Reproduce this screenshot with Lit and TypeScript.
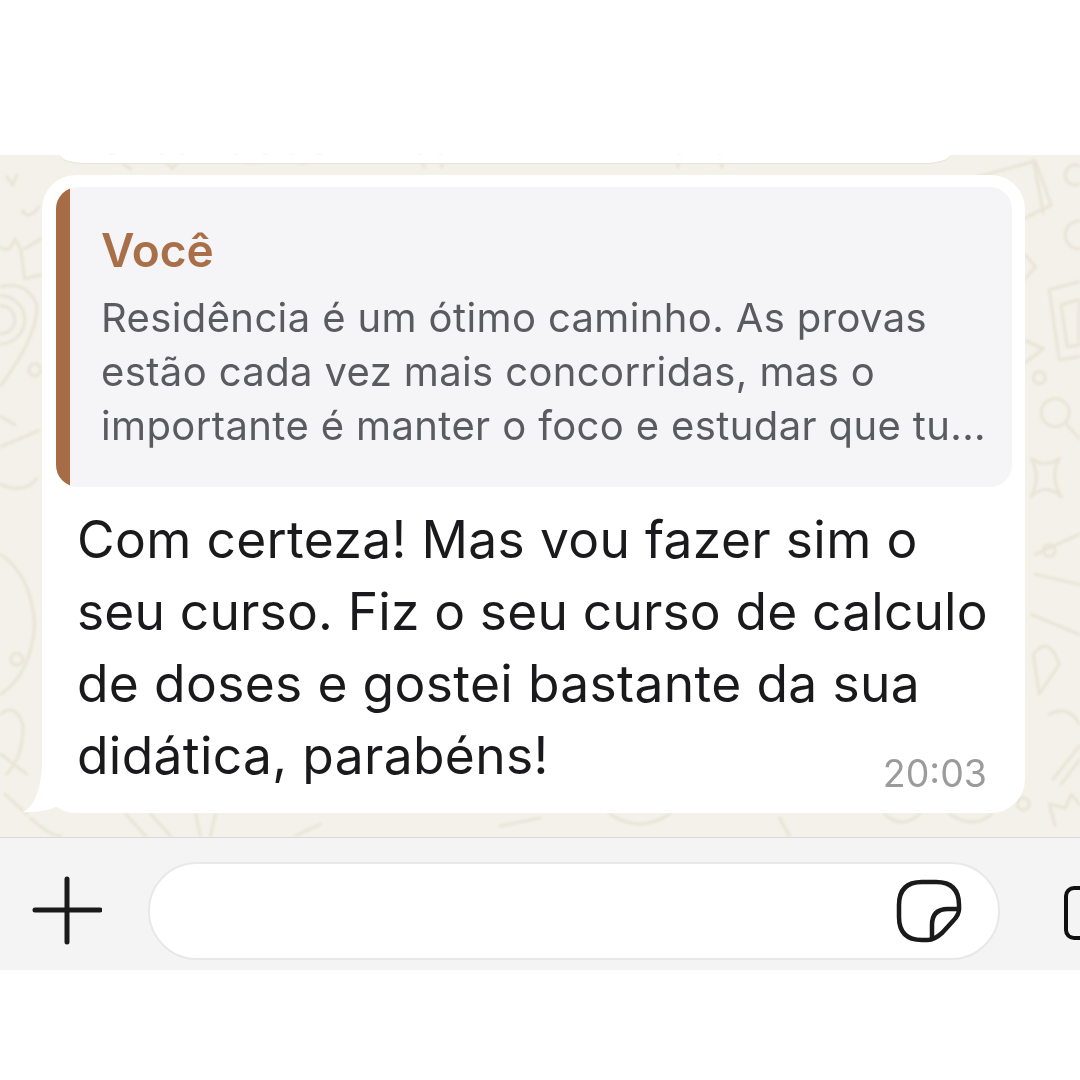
import { LitElement, html, css, svg } from "lit";
import { customElement } from "lit/decorators.js";

const doodles = svg`
  <g fill="none" stroke="#e9e4d6" stroke-width="3" stroke-linecap="round" stroke-linejoin="round">
    <path d="M6 22 L12 30 L16 20"/>
    <path d="M22 56 Q28 66 38 52"/>
    <path d="M0 92 Q8 100 14 84 L20 94 L24 124 L40 120 M24 94 L40 84"/>
    <path d="M0 132 Q26 126 36 150 Q38 180 0 231"/>
    <circle cx="0" cy="165" r="14"/><circle cx="0" cy="165" r="24"/><circle cx="34" cy="215" r="6"/>
    <path d="M0 292 L38 276 M0 262 L14 270 M0 330 Q24 340 36 324"/>
    <path d="M0 400 Q30 420 34 470 Q30 520 0 540"/>
    <circle cx="16" cy="505" r="6"/>
    <path d="M0 560 Q14 548 22 570 Q24 600 6 620 M0 600 L26 620 M4 640 L26 660"/>
    <path d="M110 0 L130 14 M160 0 L172 14 L182 0 M235 0 Q250 16 265 0 M290 0 Q300 16 320 0 M420 0 L424 12 M440 0 L442 12 M680 0 L678 12 M720 0 L722 12"/>
    <path d="M978 22 L1036 6 L1052 50 L1024 64 M1034 5 L1044 58"/>
    <circle cx="1076" cy="20" r="10"/><circle cx="1080" cy="80" r="14"/>
    <path d="M1026 100 L1036 112 L1026 124 M1026 186 L1044 194 L1026 208"/>
    <path d="M1050 135 L1080 127 M1050 135 L1060 205 L1080 202 M1062 150 L1080 145 L1080 190 L1068 192 Z"/>
    <circle cx="1040" cy="223" r="6"/><circle cx="1056" cy="258" r="14"/>
    <path d="M1066 268 L1080 284"/>
    <path d="M1032 304 Q1046 314 1060 304 Q1050 322 1062 342 Q1046 328 1032 342 Q1042 322 1032 304 Z"/>
    <path d="M1036 400 L1080 380 M1036 420 L1080 430 M1032 460 L1080 480"/>
    <circle cx="1050" cy="396" r="6"/>
    <path d="M1034 500 Q1050 480 1060 510 L1040 540 Z M1050 560 Q1070 550 1080 570"/>
    <path d="M1054 625 L1080 592 M1062 630 L1080 606"/>
    <circle cx="1024" cy="650" r="6"/>
    <path d="M1056 672 L1050 650 L1066 654 L1072 640 L1080 650"/>
    <path d="M30 664 Q50 682 60 682 M125 660 L145 682 M150 660 L170 682 M195 660 L200 682 M215 660 L210 682"/>
    <path d="M320 670 L295 682 M500 672 L540 664 M610 660 Q640 680 670 660 M780 664 L790 682 M885 660 Q903 676 920 660 M950 660 Q975 676 992 660"/>
  </g>`;

@customElement("app-root")
export class AppRoot extends LitElement {
  static styles = css`
    :host { display: flex; flex-direction: column; width: 1080px; height: 1080px; background: #fff;
      font-family: Inter, "Liberation Sans", sans-serif; overflow: hidden; }
    .top { height: 155px; flex: none; }
    .chat { position: relative; height: 683px; flex: none; background: #f4f1ea; border-bottom: 1px solid #d9d9d9; box-sizing: border-box; }
    .doodles { position: absolute; inset: 0; width: 100%; height: 100%; filter: blur(0.9px); }
    .prev { position: relative; height: 8px; margin: 0 130px 12px 60px; background: #fff; border-radius: 0 0 28px 28px / 0 0 8px 8px; box-shadow: 0 1px 1px #e6e3da; }
    .bubble { position: relative; margin: 0 55px 0 42px; height: 638px; box-sizing: border-box; padding: 12px 13px 0 14px; background: #fff; border-radius: 34px; }
    .tail { position: absolute; left: -20px; bottom: 0; width: 70px; height: 44px; }
    .quote { position: relative; height: 300px; box-sizing: border-box; padding: 38px 0 0 46px; background: #f5f4f6; border-radius: 22px; overflow: hidden; filter: blur(0.6px); }
    .bar { position: absolute; left: 0; top: 0; bottom: 0; width: 14px; background: #a76c45; }
    .who { font-size: 46px; line-height: 50px; font-weight: 580; color: #a96f49; margin-left: -1px; }
    .qt { margin-top: 16px; font-size: 40px; line-height: 54px; font-weight: 420; color: #595b5e; white-space: nowrap; letter-spacing: 0.38px; margin-left: -1px; }
    .msg { position: relative; padding: 16px 0 0 21px; font-size: 51.5px; line-height: 72px; font-weight: 420; color: #1a1a1c; white-space: nowrap; filter: blur(0.6px); letter-spacing: 0.34px; }
    .tight { letter-spacing: 0.17px; }
    .time { position: absolute; right: 25px; top: 265px; font-size: 37.5px; line-height: 44px; font-weight: 420; letter-spacing: 0; color: #9b9b9b; }
    .bar-bottom { height: 132px; flex: none; background: #f4f4f5; display: flex; align-items: center; padding: 14px 0 0 32px; box-sizing: border-box; overflow: hidden; }
    .plus { width: 70px; height: 70px; flex: none; filter: blur(0.5px); }
    .field { width: 852px; height: 98px; margin-left: 46px; flex: none; box-sizing: border-box; background: #fff; border: 2px solid #e8e8e8; border-radius: 50px; display: flex; align-items: center; justify-content: flex-end; padding-right: 36px; }
    .sticker { width: 66px; height: 64px; filter: blur(0.5px); }
    .cam { width: 40px; height: 54px; flex: none; margin-left: 64px; margin-top: 4px; box-sizing: border-box; border: 4px solid #111; border-radius: 10px 0 0 10px; border-right: 0; filter: blur(0.4px); }
    svg { display: block; }
  `;

  render() {
    return html`
      <div class="top"></div>
      <div class="chat">
        <svg class="doodles" viewBox="0 0 1080 683">${doodles}</svg>
        <div class="prev"></div>
        <div class="bubble">
          <svg class="tail" viewBox="0 0 70 44"><path d="M0 43 Q16 38 20 0 L70 0 L70 44 H60 Q48 44 36 37 Q22 44 0 43 Z" fill="#fff"/></svg>
          <div class="quote">
            <div class="bar"></div>
            <div class="who">Você</div>
            <div class="qt">Residência é um ótimo caminho. As provas<br>estão cada vez mais concorridas, mas o<br>importante é manter o foco e estudar que tu...</div>
          </div>
          <div class="msg">Com certeza! Mas vou fazer sim o<br><span class="tight">seu curso. Fiz o seu curso de calculo</span><br>de doses e gostei bastante da sua<br>didática, parabéns!<span class="time">20:03</span></div>
        </div>
      </div>
      <div class="bar-bottom">
        <svg class="plus" viewBox="0 0 70 70" fill="none" stroke="#1a1a1a" stroke-width="5" stroke-linecap="round"><path d="M35 3V66M3 34H68"/></svg>
        <div class="field">
          <svg class="sticker" viewBox="0 0 66 64" fill="none" stroke="#1a1a1a" stroke-width="4.5" stroke-linejoin="round" stroke-linecap="round">
            <path d="M26 3H40Q63 3 63 26V30Q63 36 57 42L46 54Q38 61 32 61H26Q3 61 3 38V26Q3 3 26 3Z"/>
            <path d="M63 30H52Q36 30 36 46V60"/>
          </svg>
        </div>
        <div class="cam"></div>
      </div>
    `;
  }
}
